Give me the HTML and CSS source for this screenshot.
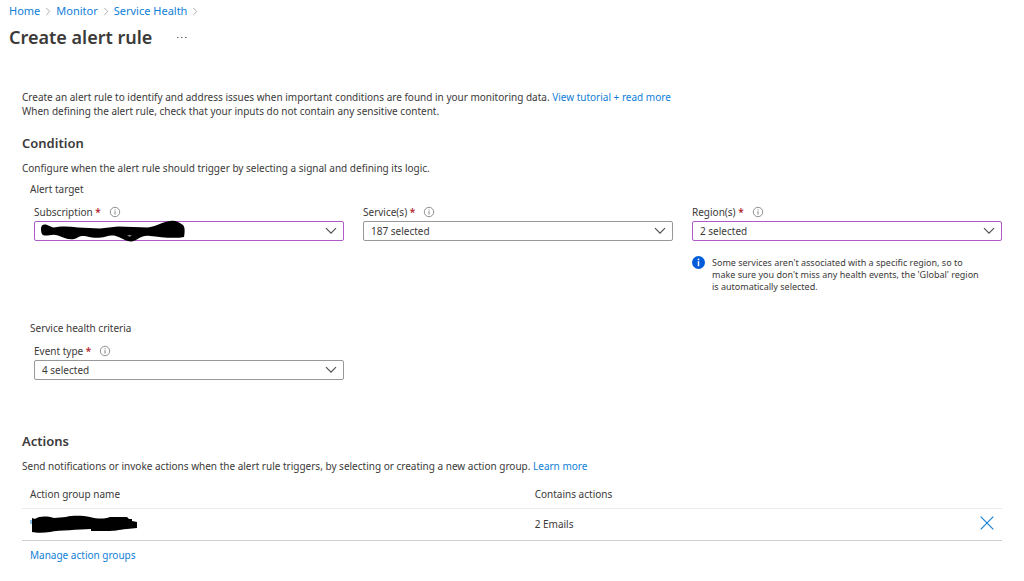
FILE: index.html
```html
<!DOCTYPE html>
<html lang="en">
<head>
<meta charset="utf-8">
<meta name="viewport" content="width=device-width, initial-scale=1">
<title>Create alert rule</title>
<link rel="stylesheet" href="styles.css">
</head>
<body>
<svg class="defs" width="0" height="0" aria-hidden="true">
  <symbol id="sep" viewBox="0 0 6 10"><path d="M1 1l4 4-4 4" fill="none" stroke="#a6a6a6"/></symbol>
  <symbol id="chev" viewBox="0 0 12 8"><path d="M1 1.2l5 5 5-5" fill="none" stroke="#505050" stroke-width="1.2"/></symbol>
  <symbol id="info" viewBox="0 0 12 12"><circle cx="6" cy="6" r="4.7" fill="none" stroke="#858585" stroke-width=".9"/><path d="M6 5.2v3.3M6 3.3v1" stroke="#707070" stroke-width=".9"/></symbol>
</svg>
<header class="header">
  <nav class="crumbs" aria-label="Breadcrumb">
    <a href="#">Home</a><svg class="sep"><use href="#sep"/></svg>
    <a href="#">Monitor</a><svg class="sep"><use href="#sep"/></svg>
    <a href="#">Service Health</a><svg class="sep"><use href="#sep"/></svg>
  </nav>
  <div class="title-row">
    <h1 class="title">Create alert rule</h1>
    <button class="more" type="button" aria-label="More"><svg width="11" height="3" viewBox="0 0 11 3"><path d="M1 1.500h1.500M5 1.500h1.500M9 1.500h1.500" stroke="#666" stroke-width="1.200"/></svg></button>
  </div>
</header>
<main class="main">
  <p class="intro">Create an alert rule to identify and address issues when important conditions are found in your monitoring data. <a href="#">View tutorial + read more</a><br>When defining the alert rule, check that your inputs do not contain any sensitive content.</p>

  <section class="condition">
    <h2 class="heading">Condition</h2>
    <p class="text">Configure when the alert rule should trigger by selecting a signal and defining its logic.</p>
    <h3 class="group-title">Alert target</h3>
    <div class="fields">
      <div class="field">
        <div class="label-row"><label for="subscription">Subscription <span class="req">*</span></label><svg class="info"><use href="#info"/></svg></div>
        <div class="picker">
          <select id="subscription" class="select edited"><option></option></select>
          <svg class="chev"><use href="#chev"/></svg>
          <svg class="scribble" width="146" height="22" viewBox="0 0 146 22" aria-hidden="true"><path d="M1 9C1 5 3 4 6 4.500L13 7.500C20 6 29 6 38 7.500L60 8.500L78 6.500L108 7.500C118 6 122 2 130 1C136 0 138 2 143 5C145 7 145 12 144 17C134 19 120 17 110 16C100 15 99 20 92 21.500C86 22 81 17 74 15.500C67 15 62 19 52 17.500C45 16 41 15 37 18C31 21 24 18 18 15.500C12 13 7 17 3 15Q1 14 1 9Z"/><path d="M87 15.500h5l-2.500 1z" fill="#fff"/></svg>
        </div>
      </div>
      <div class="field">
        <div class="label-row"><label for="services">Service(s) <span class="req">*</span></label><svg class="info"><use href="#info"/></svg></div>
        <div class="picker">
          <select id="services" class="select"><option>187 selected</option></select>
          <svg class="chev"><use href="#chev"/></svg>
        </div>
      </div>
      <div class="field">
        <div class="label-row"><label for="regions">Region(s) <span class="req">*</span></label><svg class="info"><use href="#info"/></svg></div>
        <div class="picker">
          <select id="regions" class="select edited"><option>2 selected</option></select>
          <svg class="chev"><use href="#chev"/></svg>
        </div>
        <div class="note">
          <svg width="13" height="13" viewBox="0 0 13 13" aria-hidden="true"><circle cx="6.500" cy="6.500" r="6.500" fill="#015cda"/><circle cx="6.500" cy="3.400" r=".9" fill="#fff"/><path d="M6.500 5.200v5" stroke="#fff" stroke-width="1.500"/></svg>
          <p class="note-text">Some services aren't associated with a specific region, so to make sure you don't miss any health events, the 'Global' region is automatically selected.</p>
        </div>
      </div>
    </div>
    <h3 class="group-title criteria">Service health criteria</h3>
    <div class="fields">
      <div class="field">
        <div class="label-row"><label for="event">Event type <span class="req">*</span></label><svg class="info"><use href="#info"/></svg></div>
        <div class="picker">
          <select id="event" class="select"><option>4 selected</option></select>
          <svg class="chev"><use href="#chev"/></svg>
        </div>
      </div>
    </div>
  </section>

  <section class="actions">
    <h2 class="heading">Actions</h2>
    <p class="text">Send notifications or invoke actions when the alert rule triggers, by selecting or creating a new action group. <a href="#">Learn more</a></p>
    <table class="table">
      <thead><tr><th class="name-col" scope="col">Action group name</th><th scope="col">Contains actions</th><th class="remove-col"></th></tr></thead>
      <tbody><tr>
        <td><svg class="mark" width="108" height="18" viewBox="0 0 108 18" aria-hidden="true"><path d="M1 5v4" stroke="#1683d8" stroke-width="1"/><path d="M2 3L5 4C10 1 16 1 24 3L36 2C44 0 54 1 60 2C68 4 74 4 80 2L97 2L99 4L102 4L102 6L107 7L107 13L97 14C88 15 84 16 78 16L61 16L61 14C48 15 30 15 20 17C14 18 6 18 2 17Z"/></svg></td>
        <td>2 Emails</td>
        <td class="remove-col"><button class="remove" type="button" aria-label="Remove"><svg width="14" height="14" viewBox="0 0 14 14"><path d="M.7.7l12.600 12.600M13.300.7L.7 13.300" stroke="#1683d8" stroke-width="1.200"/></svg></button></td>
      </tr></tbody>
    </table>
    <a class="manage" href="#">Manage action groups</a>
  </section>
</main>
</body>
</html>
```
FILE: styles.css
```css
* { box-sizing: border-box; }
body {
  margin: 0;
  background: #fff;
  color: #3b3a39;
  font-family: "Noto Sans", "Open Sans", sans-serif;
  font-size: 10px;
  line-height: 14px;
}
h1, h2, h3, p { margin: 0; }
a { color: #0f80d7; text-decoration: none; }
button { padding: 0; border: 0; background: none; cursor: pointer; }
svg { display: block; flex: none; }
.defs { position: absolute; }

.header { padding: 4px 9px 0; }
.crumbs { display: flex; align-items: center; gap: 5px; font-size: 11px; }
.sep { width: 6px; height: 9px; }
.title-row { display: flex; align-items: center; gap: 24px; margin-top: 7px; }
.title { font-size: 18px; line-height: 24px; font-weight: 600; }

.main { padding: 41px 22px 16px; }
.heading { margin-top: 15px; font-size: 13px; line-height: 20px; font-weight: 600; }
.text { margin-top: 8px; }
.group-title { margin: 7px 0 0 8px; font-size: 10px; font-weight: 400; }
.criteria { margin-top: 28px; }

.fields {
  display: grid;
  grid-template-columns: repeat(3, 1fr);
  gap: 19px;
  margin: 9px 0 0 12px;
}
.label-row { display: flex; align-items: center; gap: 8px; }
.req { color: #b4262c; font-weight: 600; }
.info { width: 12px; height: 12px; }
.picker { position: relative; margin-top: 2px; }
.select {
  display: block;
  width: 100%;
  height: 20px;
  padding: 0 24px 0 7px;
  border: 1px solid #9a9896;
  border-radius: 2px;
  background: #fff;
  color: inherit;
  font: inherit;
  appearance: none;
}
.edited { border-color: #ad5cc6; }
.chev { position: absolute; top: 6px; right: 7px; width: 12px; height: 8px; pointer-events: none; }
.scribble { position: absolute; top: -1px; left: 6px; pointer-events: none; }
.note { display: flex; gap: 7px; margin-top: 15px; }
.note-text { max-width: 272px; padding-top: 1px; font-size: 9px; line-height: 12px; }

.actions { margin-top: 51px; }
.table { width: 100%; margin-top: 8px; border-collapse: collapse; }
.table th, .table td { height: 32px; padding: 0 8px; text-align: left; font-weight: 400; border-bottom: 1px solid #d2d0ce; }
.table th { height: 27px; border-color: #edebe9; }
.name-col { width: 51.5%; }
.table .remove-col { width: 30px; padding: 0 8px; }
.manage { display: inline-block; margin: 7px 0 0 8px; }
```
